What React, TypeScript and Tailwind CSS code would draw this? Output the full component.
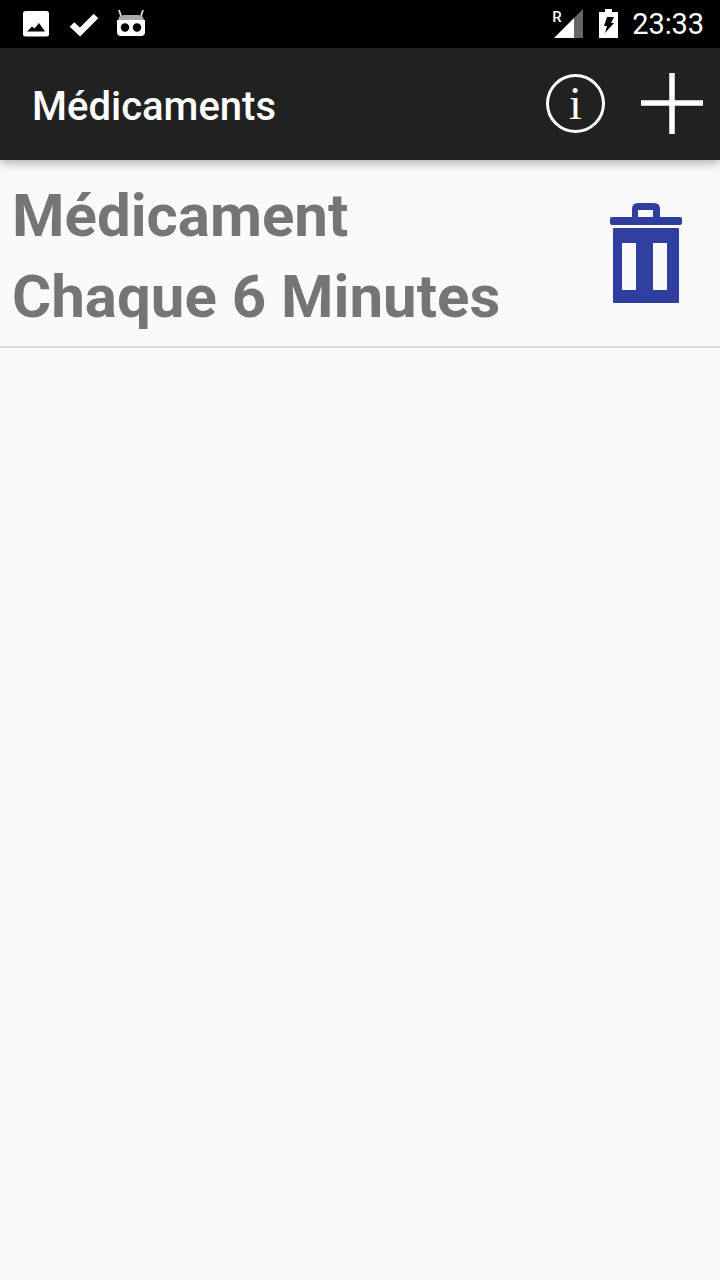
import React from 'react';

function StatusBar() {
  return (
    <div className="h-12 bg-black flex items-center justify-between pl-[23px] pr-4">
      <div className="flex items-center">
        {/* Image notification */}
        <svg width="26" height="26" viewBox="0 0 26 26" className="block">
          <rect x="0" y="0" width="26" height="25.5" rx="2.5" fill="#fff" />
          <path d="M4 20.5 L9 15.5 L11.5 17.5 L16 12 L22 20.5 Z" fill="#000" />
        </svg>
        {/* Check */}
        <svg width="30" height="26" viewBox="0 0 30 26" className="block ml-[20px]">
          <path d="M3 13.5 L11 21 L27 5" fill="none" stroke="#fff" strokeWidth="6.5" />
        </svg>
        {/* Cyanogen bugdroid */}
        <svg width="30" height="28" viewBox="0 0 30 28" className="block ml-[17px] -mt-[1px]">
          <path d="M3 0 L5 6 M27 0 L25 6" stroke="#ddd" strokeWidth="1.8" />
          <path d="M2 11 Q2 5 8 5 H22 Q28 5 28 11 Z" fill="#aaa" />
          <path d="M1 10 H29 V22 Q29 26 25 26 H5 Q1 26 1 22 Z" fill="#fff" />
          <circle cx="9" cy="17.5" r="4.2" fill="#000" />
          <circle cx="21" cy="17.5" r="4.2" fill="#000" />
        </svg>
      </div>
      <div className="flex items-center">
        {/* Signal with roaming */}
        <div className="relative w-[33px] h-[30px]">
          <span className="absolute left-[1px] top-0 text-[15px] leading-[16px] font-medium text-white font-['Roboto',sans-serif]">R</span>
          <svg width="30" height="30" viewBox="0 0 30 30" className="absolute left-[3px] top-[0px]">
            <path d="M0 29 L20 9 V29 Z" fill="#fff" />
            <path d="M20 9 L29 0 V29 H20 Z" fill="#666" />
          </svg>
        </div>
        {/* Battery charging */}
        <svg width="20" height="30" viewBox="0 0 20 30" className="block ml-[15px]">
          <path d="M6 0 H13 V3 H19 V29 H0 V3 H6 Z" fill="#fff" />
          <path d="M8 8 H15 L12 14 H15 L6 24 L8 17 H5 Z" fill="#000" />
        </svg>
        <span className="ml-[13px] text-[29px] leading-none text-white font-['Roboto',sans-serif] tracking-[-0.1px]">23:33</span>
      </div>
    </div>
  );
}

export default function App() {
  return (
    <div className="w-[720px] h-[1280px] bg-[#fafafa] flex flex-col font-['Roboto',sans-serif]">
      <StatusBar />

      {/* Toolbar */}
      <div className="relative h-28 bg-[#212121] flex items-center justify-between pl-[32px] pr-4 shadow-[0_3px_10px_rgba(0,0,0,0.3)]">
        <h1 className="text-[40px] leading-none font-medium text-white mt-[5px]">Médicaments</h1>
        <div className="flex items-center gap-[35px]">
          <div className="w-[59px] h-[59px] rounded-full border-[3px] border-white flex items-center justify-center -mt-[1px]">
            <span className="text-[46px] leading-none text-white font-['Liberation_Serif',serif]">i</span>
          </div>
          <svg width="64" height="64" viewBox="0 0 64 64" className="block">
            <path d="M32 1 V62 M1 31 H63" stroke="#fff" strokeWidth="5.5" fill="none" />
          </svg>
        </div>
      </div>

      {/* List row */}
      <div className="h-[188px] border-b-2 border-[#dcdcdc] flex items-center justify-between pl-[12px] pr-[38px]">
        <div className="text-[60px] leading-[81px] font-bold text-[#757575] pt-[5px]">
          <div>Médicament</div>
          <div>Chaque 6 Minutes</div>
        </div>
        <svg width="72" height="100" viewBox="0 0 72 100" className="block">
          <path d="M22 14 V6 Q22 0 28 0 H44 Q50 0 50 6 V14 H43 V7 H28 V14 Z" fill="#303f9f" />
          <rect x="0" y="14" width="72" height="8" rx="2" fill="#303f9f" />
          <path fillRule="evenodd" d="M4 25 H68 Q69 25 69 26 V99 Q69 100 68 100 H4 Q3 100 3 99 V26 Q3 25 4 25 Z M12 40 V87 H26 V40 Z M43 40 V87 H57 V40 Z" fill="#303f9f" />
        </svg>
      </div>
    </div>
  );
}
